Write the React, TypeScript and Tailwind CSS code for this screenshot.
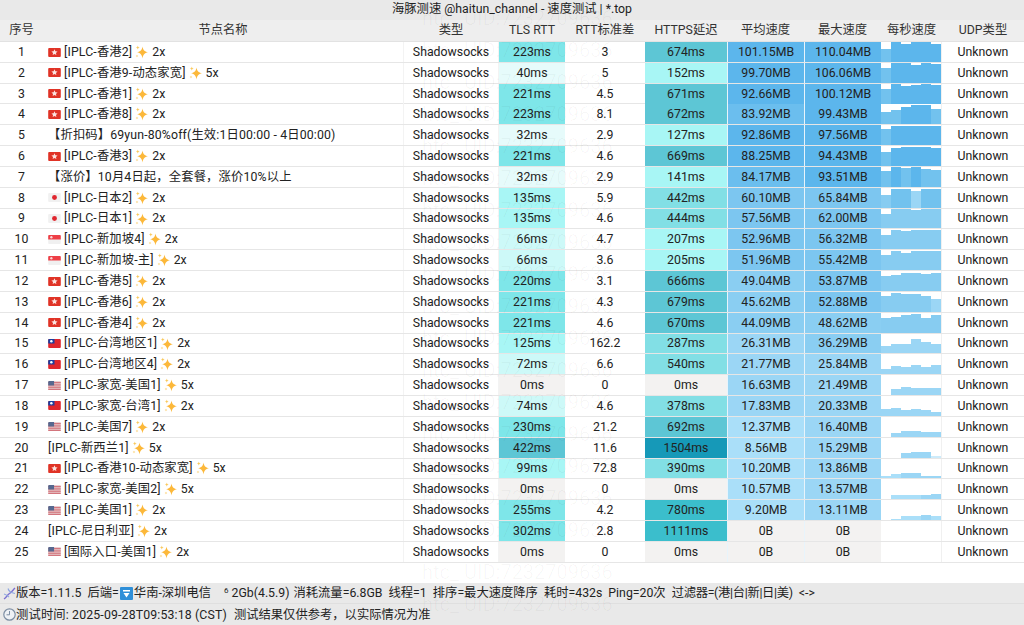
type Flag = "hk" | "jp" | "sg" | "tw" | "us" | "";

type Row = {
    flag: Flag;
    name: string;
    mult?: string;
    tls: number;
    std: string;
    https: number;
    avg: string;
    max: string;
    spark: number[];
    shades: string;
};

const rows: Row[] = [
    { flag: "hk", name: "[IPLC-香港2]", mult: "2x", tls: 223, std: "3", https: 674, avg: "101.15MB", max: "110.04MB", spark: [13, 20, 18, 20, 20, 18], shades: "baaaaa" },
    { flag: "hk", name: "[IPLC-香港9-动态家宽]", mult: "5x", tls: 40, std: "5", https: 152, avg: "99.70MB", max: "106.06MB", spark: [15, 20, 20, 18, 20, 19], shades: "baaaaa" },
    { flag: "hk", name: "[IPLC-香港1]", mult: "2x", tls: 221, std: "4.5", https: 671, avg: "92.66MB", max: "100.12MB", spark: [15, 20, 18, 19, 20, 19], shades: "baaaaa" },
    { flag: "hk", name: "[IPLC-香港8]", mult: "2x", tls: 223, std: "8.1", https: 672, avg: "83.92MB", max: "99.43MB", spark: [12, 14, 17, 19, 19, 15], shades: "bbaaab" },
    { flag: "", name: "【折扣码】69yun-80%off(生效:1日00:00 - 4日00:00)", tls: 32, std: "2.9", https: 127, avg: "92.86MB", max: "97.56MB", spark: [16, 19, 19, 19, 19, 19], shades: "baaaaa" },
    { flag: "hk", name: "[IPLC-香港3]", mult: "2x", tls: 221, std: "4.6", https: 669, avg: "88.25MB", max: "94.43MB", spark: [14, 18, 19, 19, 19, 18], shades: "baaaaa" },
    { flag: "", name: "【涨价】10月4日起，全套餐，涨价10%以上", tls: 32, std: "2.9", https: 141, avg: "84.17MB", max: "93.51MB", spark: [16, 20, 19, 20, 18, 17], shades: "bababb" },
    { flag: "jp", name: "[IPLC-日本2]", mult: "2x", tls: 135, std: "5.9", https: 442, avg: "60.10MB", max: "65.84MB", spark: [13, 19, 19, 17, 19, 19], shades: "cbbdbb" },
    { flag: "jp", name: "[IPLC-日本1]", mult: "2x", tls: 135, std: "4.6", https: 444, avg: "57.56MB", max: "62.00MB", spark: [14, 19, 19, 18, 19, 19], shades: "cccccc" },
    { flag: "sg", name: "[IPLC-新加坡4]", mult: "2x", tls: 66, std: "4.7", https: 207, avg: "52.96MB", max: "56.32MB", spark: [14, 19, 18, 19, 19, 19], shades: "cccccc" },
    { flag: "sg", name: "[IPLC-新加坡-主]", mult: "2x", tls: 66, std: "3.6", https: 205, avg: "51.96MB", max: "55.42MB", spark: [15, 19, 17, 19, 19, 19], shades: "cccccc" },
    { flag: "hk", name: "[IPLC-香港5]", mult: "2x", tls: 220, std: "3.1", https: 666, avg: "49.04MB", max: "53.87MB", spark: [15, 16, 18, 18, 17, 18], shades: "cccccc" },
    { flag: "hk", name: "[IPLC-香港6]", mult: "2x", tls: 221, std: "4.3", https: 679, avg: "45.62MB", max: "52.88MB", spark: [16, 19, 18, 18, 16, 13], shades: "cccccd" },
    { flag: "hk", name: "[IPLC-香港4]", mult: "2x", tls: 221, std: "4.6", https: 670, avg: "44.09MB", max: "48.62MB", spark: [15, 16, 18, 19, 15, 18], shades: "cccccc" },
    { flag: "tw", name: "[IPLC-台湾地区1]", mult: "2x", tls: 125, std: "162.2", https: 287, avg: "26.31MB", max: "36.29MB", spark: [7, 9, 9, 14, 11, 9], shades: "dddddd" },
    { flag: "tw", name: "[IPLC-台湾地区4]", mult: "2x", tls: 72, std: "6.6", https: 540, avg: "21.77MB", max: "25.84MB", spark: [5, 8, 7, 9, 7, 9], shades: "dddddd" },
    { flag: "us", name: "[IPLC-家宽-美国1]", mult: "5x", tls: 0, std: "0", https: 0, avg: "16.63MB", max: "21.49MB", spark: [0, 6, 8, 7, 7, 7], shades: "dddddd" },
    { flag: "tw", name: "[IPLC-家宽-台湾1]", mult: "2x", tls: 74, std: "4.6", https: 378, avg: "17.83MB", max: "20.33MB", spark: [7, 8, 6, 7, 6, 4], shades: "dddddd" },
    { flag: "us", name: "[IPLC-美国7]", mult: "2x", tls: 230, std: "21.2", https: 692, avg: "12.37MB", max: "16.40MB", spark: [0, 4, 6, 6, 5, 5], shades: "eddddd" },
    { flag: "", name: "[IPLC-新西兰1]", mult: "5x", tls: 422, std: "11.6", https: 1504, avg: "8.56MB", max: "15.29MB", spark: [0, 0, 5, 6, 6, 2], shades: "eedddf" },
    { flag: "hk", name: "[IPLC-香港10-动态家宽]", mult: "5x", tls: 99, std: "72.8", https: 390, avg: "10.20MB", max: "13.86MB", spark: [2, 4, 5, 5, 2, 2], shades: "eedddd" },
    { flag: "us", name: "[IPLC-家宽-美国2]", mult: "5x", tls: 0, std: "0", https: 0, avg: "10.57MB", max: "13.57MB", spark: [0, 4, 4, 4, 4, 5], shades: "eeeedd" },
    { flag: "us", name: "[IPLC-美国1]", mult: "2x", tls: 255, std: "4.2", https: 780, avg: "9.20MB", max: "13.11MB", spark: [0, 1, 4, 4, 5, 4], shades: "feeede" },
    { flag: "", name: "[IPLC-尼日利亚]", mult: "2x", tls: 302, std: "2.8", https: 1111, avg: "0B", max: "0B", spark: [0, 0, 0, 0, 0, 0], shades: "eeeeee" },
    { flag: "us", name: "[国际入口-美国1]", mult: "2x", tls: 0, std: "0", https: 0, avg: "0B", max: "0B", spark: [0, 0, 0, 0, 0, 0], shades: "eeeeee" },
];

const shadeColors: Record<string, string> = {
    a: "#5cb6ec",
    b: "#72c2ee",
    c: "#87ccf1",
    d: "#9bd6f5",
    e: "#aadff9",
    f: "#cdebfa",
};

function tlsColor(v: number) {
    if (v === 0) return "bg-[#f3f2f1]";
    if (v < 50) return "bg-[#e6fbfb]";
    if (v < 90) return "bg-[#cdf9f8]";
    if (v < 150) return "bg-[#a8f6f5]";
    if (v < 400) return "bg-[#7ee6e9]";
    return "bg-[#5dc6d5]";
}

function httpsColor(v: number) {
    if (v === 0) return "bg-[#f3f2f1]";
    if (v < 250) return "bg-[#a8f6f5]";
    if (v < 600) return "bg-[#82dfe5]";
    if (v < 700) return "bg-[#5dc6d5]";
    if (v < 1200) return "bg-[#3bbecc]";
    return "bg-[#1699b8]";
}

function speedColor(s: string) {
    if (s === "0B") return "bg-[#f3f2f1]";
    const v = parseFloat(s);
    if (v >= 85) return "bg-[#5cb6ec]";
    if (v >= 70) return "bg-[#6bbeee]";
    if (v >= 50) return "bg-[#7cc6f0]";
    if (v >= 30) return "bg-[#8acef2]";
    if (v >= 13) return "bg-[#9bd6f5]";
    return "bg-[#aadff9]";
}

function FlagIcon({ flag }: { flag: Flag }) {
    if (flag === "hk") {
        return (
            <svg width="13" height="9" viewBox="0 0 14 10" className="shrink-0">
                <rect width="14" height="10" rx="1" fill="#e03326" />
                <path d="M7 1.500l1 2.200 2.400.2-1.800 1.600.5 2.300L7 6.600l-2.100 1.200.5-2.300-1.800-1.600 2.400-.2z" fill="#fbe3df" />
            </svg>
        );
    }
    if (flag === "jp") {
        return (
            <svg width="13" height="9" viewBox="0 0 14 10" className="shrink-0">
                <rect width="14" height="10" rx="1" fill="#f1f1f1" />
                <circle cx="7" cy="5" r="2.700" fill="#e0272f" />
            </svg>
        );
    }
    if (flag === "sg") {
        return (
            <svg width="13" height="9" viewBox="0 0 14 10" className="shrink-0">
                <rect width="14" height="10" rx="1" fill="#f0f0f0" />
                <path d="M1 0h12a1 1 0 0 1 1 1v4H0V1a1 1 0 0 1 1-1z" fill="#ee3f46" />
                <circle cx="3.500" cy="2.500" r="1.300" fill="#fbd5d5" />
            </svg>
        );
    }
    if (flag === "tw") {
        return (
            <svg width="13" height="9" viewBox="0 0 14 10" className="shrink-0">
                <rect width="14" height="10" rx="1" fill="#e0262c" />
                <path d="M1 0h6v5H0V1a1 1 0 0 1 1-1z" fill="#1d3f9e" />
                <circle cx="3.500" cy="2.500" r="1.400" fill="#fff" />
            </svg>
        );
    }
    return (
        <svg width="13" height="9" viewBox="0 0 14 10" className="shrink-0">
            <rect width="14" height="10" rx="1" fill="#f0e4e4" />
            <path d="M0 1.500h14M0 3.500h14M0 5.500h14M0 7.500h14M0 9.300h14" stroke="#c9555f" strokeWidth="1" />
            <path d="M1 0h5.500v5H0V1a1 1 0 0 1 1-1z" fill="#57688f" />
        </svg>
    );
}

function Sparkle() {
    return (
        <svg width="13" height="14" viewBox="0 0 13 14" className="shrink-0">
            <path d="M7.500 1.500c.6 3.600 2 5 5.500 5.800-3.500.8-4.900 2.200-5.500 6.200-.6-4-2-5.400-5.500-6.200 3.500-.8 4.900-2.200 5.500-5.800z" fill="#fcb83a" />
            <path d="M2.800 0.500c.2 1.300.7 1.800 2 2.100-1.300.3-1.800.8-2 2.100-.2-1.300-.7-1.800-2-2.100 1.300-.3 1.800-.8 2-2.100z" fill="#f9c95c" />
            <path d="M2 9.500c.1.900.5 1.300 1.400 1.500-.9.200-1.300.6-1.400 1.500-.1-.9-.5-1.300-1.400-1.500.9-.2 1.300-.6 1.400-1.500z" fill="#fbd27a" />
        </svg>
    );
}

const headers = ["序号", "节点名称", "类型", "TLS RTT", "RTT标准差", "HTTPS延迟", "平均速度", "最大速度", "每秒速度", "UDP类型"];

const grid = "grid grid-cols-[43px_360px_96px_66px_80px_82px_77px_77px_61px_82px]";

// watermark repeated down the page, very faint
const marks = [18, 50, 82, 114, 146, 178, 210, 242, 274, 306, 338, 370, 402, 434, 466, 498, 530, 572, 604];

export default function App() {
    return (
        <div className="relative w-[1024px] h-[625px] overflow-hidden flex flex-col bg-white text-[12.3px] leading-none text-[#222] font-['Roboto','Noto_Sans_CJK_SC',sans-serif]">
            <div className="h-[20px] shrink-0 flex items-center justify-center pb-[2px] bg-[#e9e9e9]">
                海豚测速 @haitun_channel - 速度测试 | *.top
            </div>
            <div className={`${grid} h-[22px] shrink-0 bg-[#eeeeee] border-b border-[#e2e2e2] text-[#333]`}>
                {headers.map((h) => (
                    <div key={h} className="flex items-center justify-center">{h}</div>
                ))}
            </div>
            <div>
                {rows.map((r, i) => (
                    <div key={i} className={`${grid} h-[20.83px] border-b-[1.5px] border-[#e6e6e6]`}>
                        <div className="flex items-center justify-center">{i + 1}</div>
                        <div className="flex items-center pl-[5px] gap-[3px]">
                            {r.flag && <FlagIcon flag={r.flag} />}
                            <span className="tracking-[0.15px]">{r.name}</span>
                            {r.mult && <Sparkle />}
                            {r.mult && <span className="ml-[1px]">{r.mult}</span>}
                        </div>
                        <div className="flex items-center justify-center border-x border-[#f3f3f3]">Shadowsocks</div>
                        <div className={`flex items-center justify-center ${tlsColor(r.tls)}`}>{r.tls}ms</div>
                        <div className="flex items-center justify-center">{r.std}</div>
                        <div className={`flex items-center justify-center ${httpsColor(r.https)}`}>{r.https}ms</div>
                        <div className={`flex items-center justify-center border-l border-[#e8f4fb] ${speedColor(r.avg)}`}>{r.avg}</div>
                        <div className={`flex items-center justify-center border-l border-[#e8f4fb] ${speedColor(r.max)}`}>{r.max}</div>
                        <div className="flex items-end justify-stretch border-r border-[#f0f0f0]">
                            {r.spark.map((h, j) => (
                                <div key={j} className="flex-1" style={{ height: h, backgroundColor: shadeColors[r.shades[j]] }} />
                            ))}
                        </div>
                        <div className="flex items-center justify-center">Unknown</div>
                    </div>
                ))}
            </div>
            <div className="flex-1" />
            <div className="h-[21px] shrink-0 flex items-center bg-[#e9e9e9] border-b border-[#dfdfdf] pl-[3px] gap-[6px]">
                <span className="flex items-center">
                    <svg width="13" height="13" viewBox="0 0 13 13" className="shrink-0">
                        <path d="M1 12C4 10 4 8 6.500 6.500S10 3 12 1" fill="none" stroke="#7b6fd0" strokeWidth="1.300" />
                        <path d="M1 7c2 .5 3.500 1.500 5 3M5 1.500c.5 2 2 4 7 5" fill="none" stroke="#8fa8e0" strokeWidth="1.100" />
                    </svg>
                    版本=1.11.5
                </span>
                <span className="flex items-center">
                    后端=
                    <svg width="13" height="13" viewBox="0 0 13 13" className="shrink-0 mx-[1px]">
                        <rect width="13" height="13" rx="1" fill="#2f8fd8" />
                        <path d="M3 3h7v1.500H3zM3.500 6h6L6.500 10.500z" fill="#fff" />
                    </svg>
                    华南-深圳电信
                </span>
                <span className="ml-[7px]"><sup className="text-[8px]">6</sup> 2Gb(4.5.9)</span>
                <span className="-ml-[2px]">消耗流量=6.8GB</span>
                <span>线程=1</span>
                <span>排序=最大速度降序</span>
                <span>耗时=432s</span>
                <span>Ping=20次</span>
                <span className="tracking-[-0.3px]">过滤器=(港|台|新|日|美)</span>
                <span>{"<->"}</span>
            </div>
            <div className="h-[20.6px] shrink-0 flex items-center bg-[#e9e9e9] pl-[3px] gap-[7px]">
                <span className="flex items-center tracking-[0.15px]">
                    <svg width="13" height="13" viewBox="0 0 13 13" className="shrink-0">
                        <circle cx="6.500" cy="6.500" r="5.700" fill="#eef1f5" stroke="#7d8ea3" strokeWidth="1.200" />
                        <path d="M6.500 3v3.800H3.500" fill="none" stroke="#7d8ea3" strokeWidth="1" />
                    </svg>
                    测试时间: 2025-09-28T09:53:18 (CST)
                </span>
                <span>测试结果仅供参考，以实际情况为准</span>
            </div>
            <div className="absolute inset-0 pointer-events-none">
                {marks.map((y) => (
                    <div
                        key={y}
                        className="absolute left-[422px] text-[20px] whitespace-nowrap text-black/[.03]"
                        style={{ top: y - 10 }}
                    >
                        htc_ UID:7232709636
                    </div>
                ))}
            </div>
        </div>
    );
}
